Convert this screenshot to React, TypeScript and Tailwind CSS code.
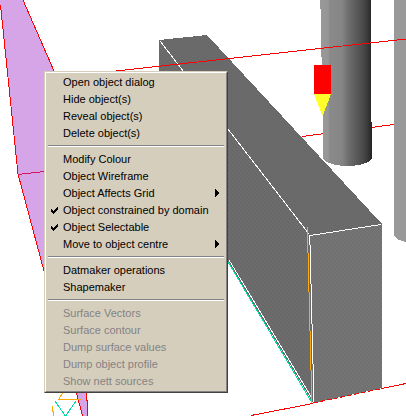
type Item = {
  label: string;
  checked?: boolean;
  submenu?: boolean;
  disabled?: boolean;
};

const groups: Item[][] = [
  [
    { label: "Open object dialog" },
    { label: "Hide object(s)" },
    { label: "Reveal object(s)" },
    { label: "Delete object(s)" },
  ],
  [
    { label: "Modify Colour" },
    { label: "Object Wireframe" },
    { label: "Object Affects Grid", submenu: true },
    { label: "Object constrained by domain", checked: true },
    { label: "Object Selectable", checked: true },
    { label: "Move to object centre", submenu: true },
  ],
  [{ label: "Datmaker operations" }, { label: "Shapemaker" }],
  [
    { label: "Surface Vectors", disabled: true },
    { label: "Surface contour", disabled: true },
    { label: "Dump surface values", disabled: true },
    { label: "Dump object profile", disabled: true },
    { label: "Show nett sources", disabled: true },
  ],
];

function Scene() {
  return (
    <svg
      className="block h-screen w-full"
      viewBox="0 0 406 416"
      preserveAspectRatio="xMinYMin slice"
      shapeRendering="crispEdges"
      fill="none"
      aria-hidden="true"
    >
      <defs>
        <linearGradient id="column" x1="0" x2="1" y1="0" y2="0">
          <stop offset="0" stopColor="#999999" />
          <stop offset="0.16" stopColor="#969696" />
          <stop offset="0.18" stopColor="#8b8b8b" />
          <stop offset="0.42" stopColor="#858585" />
          <stop offset="0.56" stopColor="#6c6c6c" />
          <stop offset="0.76" stopColor="#535353" />
          <stop offset="0.88" stopColor="#414141" />
          <stop offset="1" stopColor="#242424" />
        </linearGradient>
        <pattern id="topFace" width="4" height="4" patternUnits="userSpaceOnUse">
          <path fill="#696969" d="M0 0h4v4H0z" />
          <path fill="#6e6e6e" d="M0 0h1v1H0zM2 2h1v1H2z" />
        </pattern>
        <pattern id="sideFace" width="4" height="4" patternUnits="userSpaceOnUse">
          <path fill="#696969" d="M0 0h4v4H0z" />
          <path fill="#6f6f6f" d="M0 0h1v1H0zM1 1h1v1H1zM2 2h1v1H2zM3 3h1v1H3z" />
        </pattern>
        <pattern id="endFace" width="4" height="4" patternUnits="userSpaceOnUse">
          <path fill="#717171" d="M0 0h4v4H0z" />
          <path fill="#777777" d="M0 0h1v1H0zM1 1h1v1H1zM2 2h1v1H2zM3 3h1v1H3z" />
        </pattern>
      </defs>

      {/* purple domain wall */}
      <path
        fill="#d6a5e7"
        d="M0 0H23L54 71L76 393H87V400L88 416H82L76 393L44 271L18 174L0 5Z"
      />
      <path stroke="#ff0000" d="M0.5 5L18 174L44 271L76.5 393L82.5 416M23 0L54 71L86.5 393V400L87.5 401V416" />
      <path stroke="#d6185a" d="M18 174.5L44 171.5" />

      {/* far columns */}
      <path stroke="#ff0000" d="M302 136.5L394 124.5" />
      <path
        fill="url(#column)"
        d="M320 0H371V122H372V158C370 163 360 166 347 166C336 166 326 163 323 159V92H322V57H321V9H320Z"
      />
      <path fill="#999999" d="M394 0H406V242L399 240L395 237L394 234Z" />

      {/* block */}
      <path fill="url(#topFace)" d="M159 40L207 35L382 224L310 235Z" />
      <path fill="url(#sideFace)" d="M159 40L310 235L313 403L228 261L160 150Z" />
      <path fill="url(#endFace)" d="M310 235L382 224V388L313 403Z" />
      <path stroke="#ffffff" d="M160 41L309 234M310 235.5L381 224.5" />
      <path
        stroke="#ffffff"
        d="M309.5 235V245M310.5 245V284M311.5 284V324M312.5 324V364M313.5 364V402"
      />
      <path stroke="#ffffff" d="M229 260L312 398" />
      <path stroke="#00dba5" d="M227.5 261L311.5 402" />
      <path
        stroke="#ffaa00"
        d="M307.5 227V253M308.5 253V292M309.5 292V331M310.5 331V370M311.5 370V403"
      />

      {/* domain edges */}
      <path stroke="#ff0000" d="M116 71L406 39" />
      <path stroke="#ff0000" d="M251 415.5L313 403.5M382 388.5L406 383.5" />
      <path stroke="#ff0000" strokeDasharray="5 2" d="M313 403L382 388.5" />

      {/* probe */}
      <path fill="#ff0000" d="M314 65H331V94H314Z" />
      <path fill="#ffff29" d="M314 94H331L323 115H322Z" />

      {/* axis glyphs */}
      <path stroke="#ffaa00" d="M63 392L59 399M58 399.5H81M52.5 406V412M53.5 411V416" />
      <path stroke="#00dba5" d="M55 401L65 415.5H66L76 401" />
    </svg>
  );
}

function MenuItem({ label, checked, submenu, disabled }: Item) {
  return (
    <button
      type="button"
      role={checked ? "menuitemcheckbox" : "menuitem"}
      aria-checked={checked}
      aria-haspopup={submenu ? "menu" : undefined}
      disabled={disabled}
      className="flex h-[17px] w-full items-center pr-1 pb-px text-left whitespace-nowrap text-black disabled:text-[#848284]"
    >
      <span className="w-4 shrink-0 pl-1">
        {checked && (
          <svg className="h-2 w-2" viewBox="0 0 8 8" shapeRendering="crispEdges" aria-hidden="true">
            <path d="M0 3h1v1h1v1h1V4h1V3h1V2h1V1h1v3H6v1H5v1H4v1H3v1H2V7H1V6H0z" />
          </svg>
        )}
      </span>
      <span className="grow">{label}</span>
      {submenu && (
        <svg className="h-2 w-2" viewBox="0 0 8 8" shapeRendering="crispEdges" aria-hidden="true">
          <path d="M2 0h1v1h1v1h1v1h1v2H5v1H4v1H3v1H2z" />
        </svg>
      )}
    </button>
  );
}

export default function App() {
  return (
    <main className="relative min-h-screen overflow-hidden bg-white">
      <Scene />
      <div
        role="menu"
        aria-label="Object"
        className="absolute top-[71px] left-[44px] w-[184px] border border-t-[#d6cebd] border-r-[#424142] border-b-[#424142] border-l-[#d6cebd] font-['Liberation_Sans',Arial,sans-serif] text-[11px] leading-4"
      >
        <div className="border border-t-white border-r-[#848284] border-b-[#848284] border-l-white bg-[#d6cebd] p-px">
          {groups.map((items, index) => (
            <div key={items[0].label}>
              {index > 0 && (
                <div
                  role="separator"
                  className="mx-px mt-[3px] mb-1 h-0.5 border-t border-b border-t-[#848284] border-b-white"
                />
              )}
              {items.map((item) => (
                <MenuItem key={item.label} {...item} />
              ))}
            </div>
          ))}
        </div>
      </div>
    </main>
  );
}
